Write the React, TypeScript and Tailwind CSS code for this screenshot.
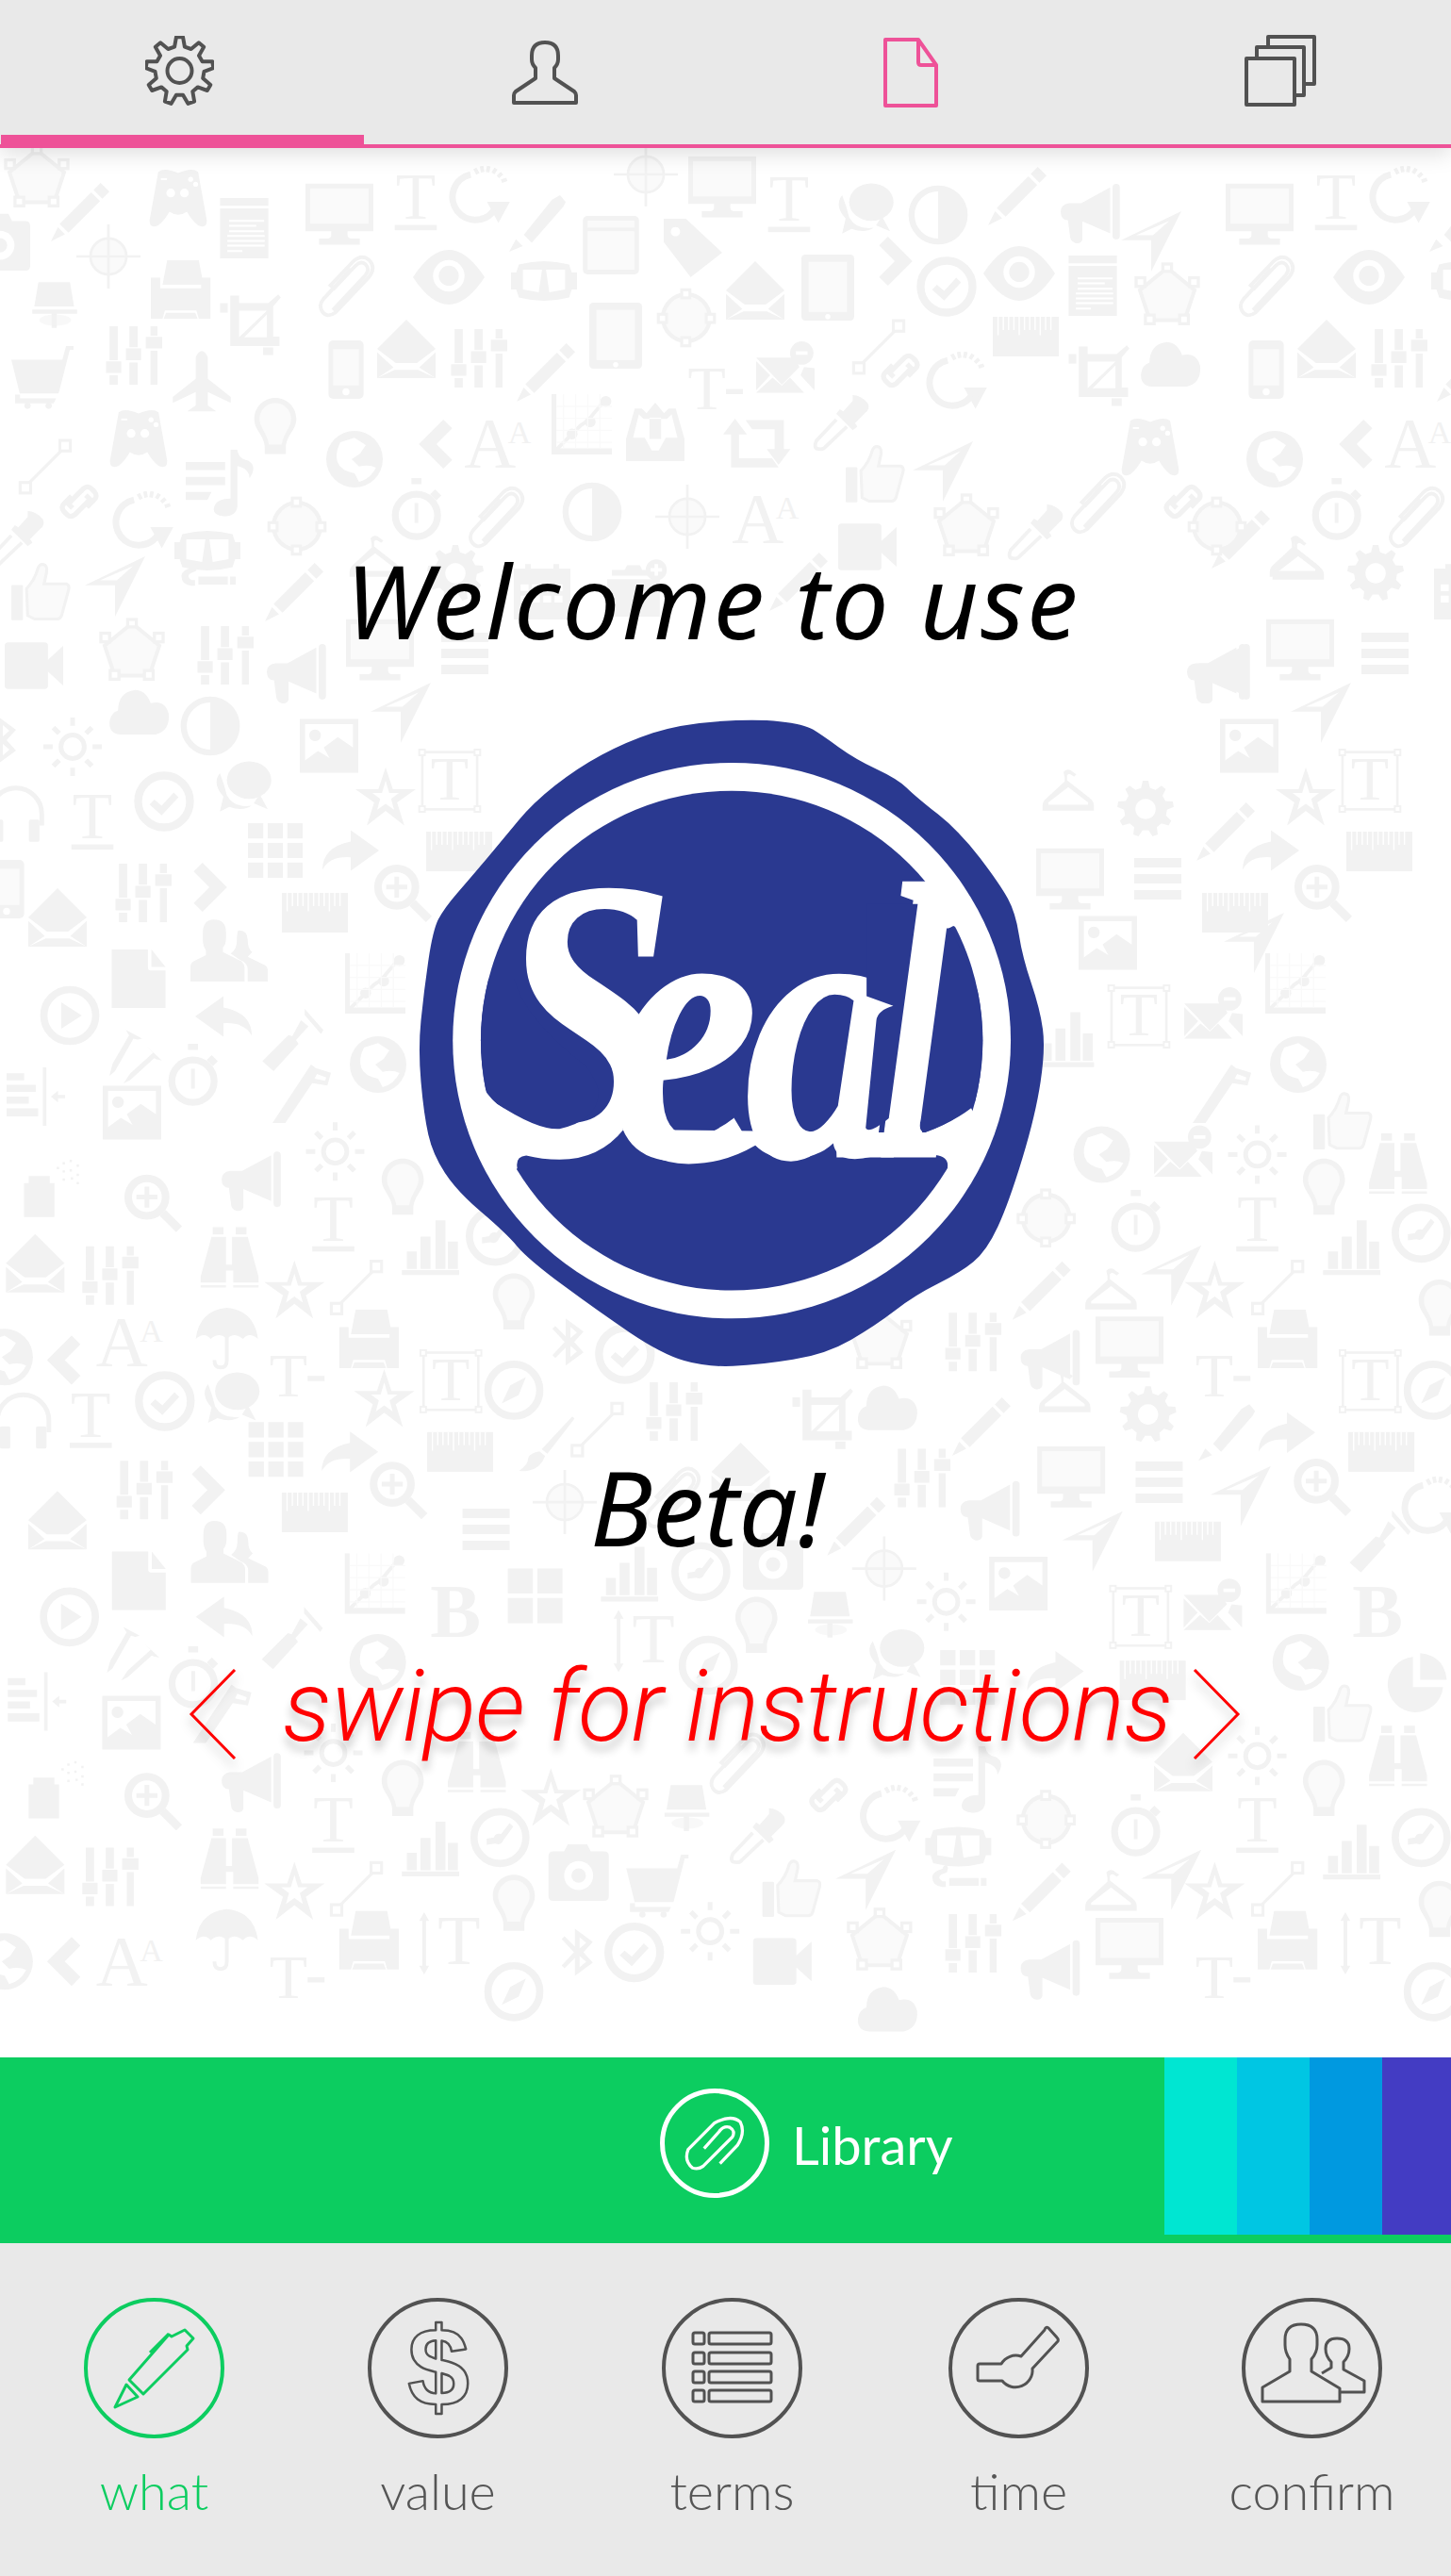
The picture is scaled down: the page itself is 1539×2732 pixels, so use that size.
const G = '#f2f2f2';
const L = '#fafafa';

function gearPath(cx: number, cy: number, ro: number, ri: number, n: number) {
  let d = '';
  for (let i = 0; i < n; i++) {
    const a = (i / n) * Math.PI * 2 - Math.PI / 2;
    const s = (Math.PI * 2) / n;
    const pts: [number, number][] = [
      [ri, a - s * 0.3],
      [ro, a - s * 0.14],
      [ro, a + s * 0.14],
      [ri, a + s * 0.3],
    ];
    pts.forEach(([r, t], j) => {
      d += `${i === 0 && j === 0 ? 'M' : 'L'}${(cx + r * Math.cos(t)).toFixed(1)} ${(cy + r * Math.sin(t)).toFixed(1)}`;
    });
  }
  return d + 'Z';
}

function smooth(pts: number[][]) {
  const mid = (a: number[], b: number[]) => [(a[0] + b[0]) / 2, (a[1] + b[1]) / 2];
  const start = mid(pts[pts.length - 1], pts[0]);
  let d = `M${start[0]} ${start[1]}`;
  pts.forEach((p, i) => {
    const m = mid(p, pts[(i + 1) % pts.length]);
    d += `Q${p[0]} ${p[1]} ${m[0]} ${m[1]}`;
  });
  return d + 'Z';
}

const serif = 'Liberation Serif';

// background pattern drawings, all in a 100x100 box
const symbols: Record<string, React.ReactNode> = {
  monitor: <><path d="M0 8h100v70H62v6q0 5 8 5h10v9H20v-9h10q8 0 8-5v-6H0z" /><rect x="7" y="15" width="86" height="52" fill={L} /></>,
  T: <><text x="50" y="78" fontFamily={serif} fontSize="112" textAnchor="middle">T</text><rect x="14" y="88" width="72" height="9" /></>,
  pencil: <path d="M85 0l15 15-12 12L73 12zM69 16l15 15-54 54-15-15zM12 76l12 12L0 100z" />,
  pen: <path d="M90 0l10 12-4 8-56 64-14-14 50-62zM12 78l12 12L0 100z" />,
  gamepad: <><path d="M18 8q10-8 32 2 22-10 32-2l14 78q0 14-14 8-10-8-18-22-14 10-28 0-8 14-18 22-14 6-14-8z" /><circle cx="38" cy="42" r="7" fill="#fff" /><circle cx="60" cy="42" r="7" fill="#fff" /><rect x="22" y="18" width="10" height="3" fill="#fff" /><circle cx="70" cy="20" r="4" fill="#fff" /><circle cx="78" cy="28" r="4" fill="#fff" /></>,
  notes: <><path d="M10 0h80v13H10zM10 17h80v83H10z" /><path d="M25 38h58M25 46h45M25 55h58M22 63h62M22 71h62M22 79h62M22 88h25" stroke="#fff" strokeWidth="3" /></>,
  gauge: <><path d="M30 22a38 38 0 1 0 42 54" fill="none" stroke={G} strokeWidth="11" /><path d="M62 70h28l-14 26zM37 12l5 9 M48 8l2 10M60 8l-2 10M72 12l-5 8M82 20l-7 6M90 30l-9 3" stroke={G} strokeWidth="6" /></>,
  target: <g fill="none" stroke={G} strokeWidth="4"><circle cx="50" cy="50" r="28" fill={L} /><path d="M50 0v100M0 50h100" /></g>,
  lamp: <><path d="M18 30h62l8 48H10zM6 84h88v8H6zM44 92h10v28H44z" transform="scale(.9)" /><ellipse cx="46" cy="94" rx="28" ry="10" opacity=".5" /></>,
  printer: <path d="M28 0h54l8 42H20zM0 30h16v18h70V30h16v70H82l-4-14H24l-4 14H0zM26 90h50l4 10H22z" />,
  clip: <path d="M22 92L76 34q8-10 0-18-8-6-16 2L24 56l-6-5 38-40q14-12 26-2 12 12 0 28L26 96q-14 10-22-2-6-10 2-20L52 24" fill="none" stroke={G} strokeWidth="6" />,
  eye: <><path d="M0 50Q25 12 50 12T100 50Q75 88 50 88T0 50z" /><circle cx="50" cy="48" r="22" fill="#fff" /><circle cx="50" cy="48" r="14" /></>,
  crop: <><path d="M16 6h14v12h46L92 4l4 5-12 14v48h10v15H16z" /><path d="M30 30h44L30 72zM38 72l36-36v36z" fill="#fff" /><rect x="0" y="18" width="12" height="15" /><rect x="68" y="88" width="16" height="12" /></>,
  cart: <><path d="M0 22h82l6-22h12v6h-6L76 76H14v8h58l-4 8H6v-14h8z" /><circle cx="26" cy="96" r="5" /><circle cx="60" cy="96" r="5" /></>,
  sliders: <path d="M10 0h14v58H10zM4 60h26v20H4zM10 84h14v16H10zM44 0h14v36H44zM38 38h26v20H38zM44 62h14v38H44zM80 0h12v16H80zM72 18h28v20H72zM80 42h12v58H80z" />,
  plane: <path d="M40 12q10-20 20 0v36l38 30v10L60 70v22l14 10H26l14-10V70L2 88V78l38-30z" />,
  phone: <><rect x="20" y="0" width="60" height="100" rx="8" /><rect x="28" y="15" width="44" height="62" fill={L} /><circle cx="50" cy="88" r="6" fill="#fff" /></>,
  envOpen: <><path d="M50 0l50 50-32 24H32L0 50zM0 56l28 26L0 100zM100 56L72 82l28 18zM30 86h40l30 14H0z" /></>,
  bulb: <><path d="M50 0c20 0 36 16 36 36 0 20-18 28-18 50v10H32V86C32 64 14 56 14 36 14 16 30 0 50 0z" /><path d="M50 9c15 0 27 12 27 27 0 15-13 24-16 44H39C36 60 23 51 23 36 23 21 35 9 50 9z" fill={L} /></>,
  globe: <><circle cx="50" cy="50" r="50" /><path d="M25 20Q15 40 20 55T50 75l8 15q20-5 30-25-12-6-30-2L45 50 60 40 70 25 50 12z" fill="#fff" /></>,
  chevL: <path d="M60 0l18 18-32 32 32 32-18 18L10 50z" />,
  chevR: <path d="M40 0l50 50-50 50-18-18 32-32-32-32z" />,
  line: <><path d="M15 85L85 15" stroke={G} strokeWidth="5" /><rect x="75" y="5" width="18" height="18" fill="#fff" stroke={G} strokeWidth="5" /><rect x="7" y="77" width="18" height="18" fill="#fff" stroke={G} strokeWidth="5" /></>,
  link: <path d="M38 62l-8-8 28-28q8-6 14 0l6 6q6 8 0 14L64 60M62 38l8 8-28 28q-8 6-14 0l-6-6q-6-8 0-14l14-14" fill="none" stroke={G} strokeWidth="9" />,
  music: <path d="M0 18h58v12H0zM0 40h58v12H0zM0 62h38l-6 12H0zM66 0h10q2 14 16 16 14 8 2 26 0-14-18-18v60q-2 14-20 14-18-2-14-14 4-12 24-12z" />,
  node: <><circle cx="50" cy="50" r="40" fill={L} stroke={G} strokeWidth="7" /><g fill="#fff" stroke={G} strokeWidth="5"><rect x="42" y="2" width="14" height="14" /><rect x="42" y="84" width="14" height="14" /><rect x="2" y="44" width="14" height="14" /><rect x="84" y="44" width="14" height="14" /></g></>,
  pentagon: <><path d="M50 6L94 42 78 90H22L6 42z" fill={L} stroke={G} strokeWidth="6" /><g fill="#fff" stroke={G} strokeWidth="5"><rect x="43" y="0" width="14" height="12" /><rect x="0" y="22" width="14" height="14" /><rect x="86" y="22" width="14" height="14" /><rect x="15" y="82" width="14" height="14" /><rect x="70" y="82" width="14" height="14" /></g></>,
  stopwatch: <><circle cx="48" cy="60" r="34" fill="none" stroke={G} strokeWidth="11" /><path d="M40 0h16v10H40zM78 18l10 10-8 8-10-10zM45 40h6v32h-6z" /></>,
  dropper: <><path d="M70 0q14 0 26 14 4 10-4 16l-18 18 4 6-8 6-28-28 6-8 6 4 16-18z" /><path d="M42 42L8 78q-6 14 4 14 8 2 12-4l36-34" fill="none" stroke={G} strokeWidth="6" /></>,
  goggles: <path fillRule="evenodd" d="M12 25q38-10 76 0l4 12h8v26h-8l-4 12q-38 10-76 0l-4-12H0V37h8zM18 33v30l24 4 5-34zM53 33l5 34 24-4V33z" />,
  hanger: <path d="M42 6q8-8 16 0l6 4-4 4-6-4q-4-2-6 2v8l38 30q8 6 8 14v8H6v-8q0-8 8-14L44 22v-6zM50 32L16 58v4h68v-4z" fillRule="evenodd" />,
  gear: <path fillRule="evenodd" d={gearPath(50, 50, 50, 38, 9) + 'M50 32a18 18 0 1 0 .1 0z'} />,
  thumb: <><rect x="0" y="38" width="20" height="60" rx="2" /><path d="M26 44Q40 30 46 8q4-8 12-4 4 4 2 14l-4 18h38q6 2 4 10L86 90q-2 6-8 6H40L28 90z" fill={L} stroke={G} strokeWidth="5" /></>,
  nav: <path d="M100 0L50 100V48H0zM80 16L25 40h28z" fillRule="evenodd" />,
  cigarette: <path d="M22 20q2-8 8-6l2 4-2 8-10 4q-8 6 2 12h6v10H22Q4 50 4 34 6 24 22 20zM34 36h52v14H34zM90 36h10v14H90z" />,
  half: <><circle cx="50" cy="50" r="44" fill="none" stroke={G} strokeWidth="10" /><path d="M50 6a44 44 0 0 1 0 88z" /></>,
  calc: <><rect x="2" y="0" width="96" height="100" rx="8" /><rect x="10" y="8" width="80" height="12" fill={L} /><rect x="10" y="26" width="80" height="66" fill={L} /></>,
  tag: <path fillRule="evenodd" d="M0 0h38l62 58-54 42L0 40zM20 14a8 8 0 1 0 .1 0z" />,
  tablet: <><rect x="10" y="0" width="80" height="100" rx="6" /><rect x="21" y="11" width="58" height="76" fill={L} /><circle cx="50" cy="94" r="4" fill="#fff" /></>,
  check: <><circle cx="50" cy="50" r="43" fill="none" stroke={G} strokeWidth="13" /><path d="M26 55l8-8 12 10 20-22 8 8-28 30z" /></>,
  chat: <><path d="M10 24q-14 18 6 40L10 90l16-8q24 8 38-2-30 4-42-18-4-18-12-38z" /><ellipse cx="60" cy="36" rx="38" ry="32" /><path d="M78 60l14 26-24-10z" /></>,
  Tminus: <><text x="36" y="82" fontFamily={serif} fontSize="110" textAnchor="middle">T</text><rect x="70" y="46" width="30" height="9" /></>,
  envMinus: <><path d="M0 28h66l8 16L44 74 0 28zM0 34l24 24L0 84zM82 44l18 2v38L76 58zM28 62l16 14 14-14 24 26H0z" /><circle cx="78" cy="20" r="20" /><rect x="68" y="17" width="20" height="6" fill="#fff" /></>,
  chart: <><path d="M0 0h8v90h92v10H0z" /><path d="M8 92L48 52 60 44 90 8" fill="none" stroke={G} strokeWidth="6" /><circle cx="34" cy="66" r="9" /><circle cx="64" cy="46" r="9" /><circle cx="90" cy="12" r="9" /><path d="M20 0v90M40 0v90M60 0v90M80 0v90M8 20h92M8 40h92M8 60h92M8 80h92" stroke={L} strokeWidth="2" /></>,
  inbox: <path d="M15 10h12l8 8L50 0l15 18 8-8h12l15 52v38H0V62zM40 26v36h20V26zM22 20L12 60h20l12 22h12l12-22h20L78 20 70 28H30z" fillRule="evenodd" />,
  retweet: <path d="M18 10l18 24H24v36h50l10 14H12V34H0zM34 12h58v44h10L84 80 66 56h12V26H44z" />,
  Aa: <><text x="38" y="88" fontFamily={serif} fontSize="112" textAnchor="middle">A</text><text x="84" y="50" fontFamily={serif} fontSize="50" textAnchor="middle">A</text></>,
  A: <text x="50" y="90" fontFamily={serif} fontSize="130" textAnchor="middle">A</text>,
  B: <text x="50" y="90" fontFamily={serif} fontWeight="bold" fontSize="130" textAnchor="middle">B</text>,
  video: <path d="M6 10h62q6 0 6 6v24l26-24v68L74 60v24q0 6-6 6H6q-6 0-6-6V16q0-6 6-6z" />,
  calendar: <><path d="M0 10h20V2h10v8h40V2h10v8h20v90H0z" /><path d="M12 38h14v12H12zM32 38h14v12H32zM52 38h14v12H52zM72 38h14v12H72zM12 58h14v12H12zM32 58h14v12H32zM52 58h14v12H52zM72 58h14v12H72z" fill="#fff" /></>,
  cameraPlus: <><path d="M8 20h22l4-8h22l4 8h10v10H8zM0 36h90v64H0z" /><circle cx="84" cy="20" r="18" /><path d="M81 10h6v7h7v6h-7v7h-6v-7h-7v-6h7z" fill="#fff" /></>,
  camera: <><path d="M8 18h18l6-12h32l6 12h22q8 0 8 8v66q0 8-8 8H8q-8 0-8-8V26q0-8 8-8z" /><circle cx="50" cy="58" r="24" fill="#fff" /><circle cx="50" cy="58" r="12" /></>,
  megaphone: <path d="M92 0q6 0 6 6v80q0 6-6 6t-6-6V6q0-6 6-6zM82 6v76L36 62v30q-2 8-12 6-6-2-8-8L12 60q-12 0-12-14 0-12 14-14h20z" />,
  list: <path d="M0 6h100v20H0zM0 40h100v20H0zM0 74h100v20H0z" />,
  cloud: <path d="M20 86Q0 84 2 64q2-14 14-18Q16 16 44 12q18 0 26 22 24-6 30 18 2 28-22 34z" />,
  photo: <path fillRule="evenodd" d="M0 4h100v92H0zM9 13v62l22-16 20 12-10-18 24-18 26 18V13zM26 22a10 10 0 1 0 .1 0z" />,
  sun: <><circle cx="50" cy="50" r="20" fill="none" stroke={G} strokeWidth="8" /><path d="M46 0h8v14h-8zM46 86h8v14h-8zM0 46h16v8H0zM84 46h16v8H84zM14 20l6-6 10 10-6 6zM80 14l6 6-10 10-6-6zM14 80l10-10 6 6-10 10zM70 76l6-6 10 10-6 6z" /></>,
  bluetooth: <path d="M42 0l38 28-20 22 20 22-38 28V62L20 84l-6-6 26-28-26-28 6-6 22 22zM52 18v24l14-12zM52 58v24l14-12z" fillRule="evenodd" />,
  headphones: <><path d="M6 70V50a44 44 0 0 1 88 0v20" fill="none" stroke={G} strokeWidth="8" /><rect x="72" y="60" width="18" height="38" rx="3" /><rect x="10" y="60" width="18" height="38" rx="3" /></>,
  star: <path fillRule="evenodd" d="M50 0l12 36h38L69 58l12 38-31-24-31 24 12-38L0 36h38zM50 22l-6 20H28l13 10-5 18 14-10 14 10-5-18 13-10H56z" />,
  Tbox: <><rect x="6" y="4" width="88" height="92" fill="none" stroke={G} strokeWidth="4" /><text x="50" y="80" fontFamily={serif} fontSize="100" textAnchor="middle">T</text><g fill="#fff" stroke={G} strokeWidth="3"><rect x="1" y="0" width="9" height="9" /><rect x="90" y="0" width="9" height="9" /><rect x="1" y="91" width="9" height="9" /><rect x="90" y="91" width="9" height="9" /></g></>,
  grid: <path d="M0 0h28v28H0zM36 0h28v28H36zM72 0h28v28H72zM0 36h28v28H0zM36 36h28v28H36zM72 36h28v28H72zM0 72h28v28H0zM36 72h28v28H36zM72 72h28v28H72z" />,
  grid4: <path d="M0 0h46v46H0zM54 0h46v46H54zM0 54h46v46H0zM54 54h46v46H54z" />,
  redo: <path d="M50 14l50 36-50 36V62Q12 60 0 84 0 44 50 34z" />,
  reply: <path d="M50 14L0 50l50 36V62q38-2 50 22 0-40-50-50z" />,
  ruler: <><rect x="0" y="20" width="100" height="60" /><path d="M8 20v28M16 20v20M24 20v20M32 20v20M40 20v28M48 20v20M56 20v20M64 20v20M72 20v28M80 20v20M88 20v20" stroke="#fff" strokeWidth="2" /></>,
  zoomPlus: <><circle cx="40" cy="40" r="32" fill="none" stroke={G} strokeWidth="13" /><path d="M62 72l10-10 28 28-10 10zM36 22h8v14h14v8H44v14h-8V44H22v-8h14z" /></>,
  users: <path d="M30 4q16 0 16 16v8q0 8-4 12v6l24 12q4 4 4 8v18H0V66q0-6 4-8l16-8v-6q-4-6-4-14v-8q0-18 14-18zM62 18q12 0 12 12 0 12 6 16l-6 6 20 10q6 2 6 8v14H74V68q0-8-10-12L52 48q8-6 8-16 0-12 2-14z" />,
  doc: <path d="M4 0h62v32q0 4 4 4h26v64H4zM72 0l24 30H72z" />,
  play: <><circle cx="50" cy="50" r="43" fill="none" stroke={G} strokeWidth="12" /><path d="M36 28l34 22-34 22z" /></>,
  hammer: <path d="M70 0l30 34-4 6-26-30zM64 18l12 10-20 22 4 6L20 100 2 84l42-42 6 2z" />,
  nails: <path d="M30 2l30 16-8 2-8-2L10 78l-10 8 6-22L36 12zM68 32l28 26-10-2-4-2-44 40-12 6 12-18 42-38z" />,
  saw: <path d="M66 0l8 6 26 8-6 22-26-4-46 68H0zM76 16l-4 8 18 4 2-6z" fillRule="evenodd" />,
  listLeft: <path d="M0 10h30v12H0zM0 30h50v12H0zM0 50h38v12H0zM0 70h54v14H0zM62 0h6v100h-6zM76 50l12-10v7h12v6H88v7z" />,
  spray: <><path d="M12 30h36v12h8v58H4V42h8z" /><path d="M70 6h4v4h-4zM82 2h4v4h-4zM94 10h4v4h-4zM70 20h4v4h-4zM82 18h4v4h-4zM94 26h4v4h-4zM60 14h4v4h-4zM70 34h4v4h-4zM84 32h4v4h-4zM94 40h4v4h-4z" /></>,
  binoculars: <path d="M22 0h18v12H22zM60 0h18v12H60zM20 16h24v46H54V16h26l18 66v10H56V72H44v20H2V82zM2 96h42v4H2zM56 96h42v4H56z" />,
  umbrella: <><path d="M50 0q44 4 50 50-14-12-24 0-14-12-26 0-12-12-26 0-10-12-24 0Q6 4 50 0z" /><path d="M50 44v40q0 12-10 12t-10-12" fill="none" stroke={G} strokeWidth="6" /></>,
  brush: <path d="M96 0l4 4-48 62-10-8zM38 62l10 8q-8 22-30 26-10 2-16 0 16-10 16-22 4-10 20-12z" />,
  bars: <path d="M4 90h92v8H4zM12 60h16v28H12zM34 36h16v52H34zM58 10h16v78H58zM78 44h16v44H78z" />,
  clock: <><circle cx="50" cy="50" r="43" fill="none" stroke={G} strokeWidth="12" /><path d="M66 26l6 6-16 22q-4 10-14 6l-14 2v-10l12-2q2-8 12-6z" /></>,
  compass: <><circle cx="50" cy="50" r="43" fill="none" stroke={G} strokeWidth="12" /><path d="M70 28L58 58 30 72l14-30z" /></>,
  Tarrow: <><text x="66" y="84" fontFamily={serif} fontSize="112" textAnchor="middle">T</text><path d="M10 0l8 14h-5v72h5l-8 14-8-14h5V14H2z" /></>,
  pie: <path d="M44 6v50h50a46 46 0 1 1-50-50zM56 0q40 4 44 44H56z" />,
};

const sizes: Record<string, number> = {
  monitor: 72, T: 62, pencil: 62, pen: 60, gamepad: 66, notes: 64, gauge: 64, target: 68, lamp: 60, printer: 62, clip: 64, eye: 76, crop: 67, cart: 66, sliders: 62, plane: 64, phone: 62, envOpen: 62, bulb: 62, globe: 60, chevL: 52, chevR: 52, line: 62, link: 58, music: 72, node: 62, pentagon: 66, stopwatch: 66, dropper: 62, goggles: 70, hanger: 62, gear: 60, thumb: 62, nav: 64, cigarette: 60, half: 64, calc: 62, tag: 62, tablet: 70, check: 64, chat: 62, Tminus: 60, envMinus: 62, chart: 64, inbox: 62, retweet: 70, Aa: 68, video: 62, calendar: 60, cameraPlus: 62, camera: 64, megaphone: 64, list: 50, cloud: 64, photo: 62, sun: 62, bluetooth: 50, headphones: 62, star: 64, Tbox: 66, grid: 58, grid4: 58, redo: 60, reply: 60, ruler: 70, zoomPlus: 62, users: 82, doc: 62, play: 64, hammer: 66, nails: 58, saw: 62, listLeft: 62, spray: 62, binoculars: 64, umbrella: 66, brush: 60, bars: 66, clock: 64, compass: 64, Tarrow: 66, pie: 64, A: 60, B: 62,
};

// upper part of the wallpaper, page coordinates. x >= 314 repeats 976px further right
const upper: [string, number, number][] = [
  ['pentagon', 39, 188], ['pencil', 85, 225], ['gamepad', 189, 210], ['notes', 259, 242], ['monitor', 360, 225], ['T', 441, 215], ['gauge', 512, 203], ['camera', 0, 255], ['target', 115, 272], ['lamp', 61, 313], ['printer', 191, 307], ['clip', 371, 302], ['eye', 476, 294], ['crop', 267, 343], ['cart', 45, 400], ['sliders', 141, 377], ['plane', 214, 403], ['phone', 367, 392], ['envOpen', 431, 370], ['sliders', 507, 380], ['gamepad', 147, 465], ['bulb', 292, 453], ['globe', 376, 487], ['chevL', 465, 471], ['line', 48, 495], ['link', 84, 532], ['gauge', 155, 548], ['music', 233, 513], ['node', 315, 558], ['stopwatch', 443, 540], ['dropper', 17, 573], ['goggles', 220, 584], ['hanger', 398, 598], ['gear', 483, 608], ['thumb', 43, 628], ['nav', 122, 622], ['cigarette', 220, 620], ['pencil', 312, 628],
  ['pen', 570, 237], ['target', 685, 185], ['monitor', 766, 196], ['T', 837, 217], ['chat', 918, 223], ['half', 995, 228], ['calc', 648, 260], ['tag', 735, 263], ['goggles', 577, 298], ['envOpen', 801, 308], ['tablet', 878, 305], ['chevR', 947, 277], ['check', 1004, 304], ['tablet', 653, 356], ['node', 728, 337], ['line', 932, 368], ['link', 955, 393], ['pencil', 579, 395], ['Tminus', 758, 415], ['envMinus', 833, 393], ['chart', 617, 450], ['inbox', 695, 458], ['retweet', 802, 472], ['dropper', 892, 450], ['Aa', 528, 470], ['clip', 530, 547], ['half', 628, 543], ['target', 729, 548], ['Aa', 812, 550], ['video', 920, 580], ['thumb', 928, 503], ['nav', 1000, 500], ['pencil', 847, 617], ['calendar', 575, 627], ['cameraPlus', 675, 623],
  ['pencil', 1079, 208], ['megaphone', 1157, 227], ['nav', 1221, 256], ['eye', 1081, 290], ['notes', 1159, 303], ['pentagon', 1238, 313], ['ruler', 1088, 357], ['cloud', 1241, 387], ['crop', 1167, 397], ['gauge', 1018, 400], ['gamepad', 1220, 474], ['clip', 1168, 532], ['link', 1255, 532], ['pentagon', 1025, 558], ['dropper', 1098, 566], ['pencil', 1316, 572], ['hanger', 1377, 601],
  ['video', 36, 706], ['pentagon', 140, 690], ['sliders', 238, 695], ['megaphone', 315, 715], ['monitor', 403, 687], ['list', 493, 693], ['cloud', 147, 756], ['half', 223, 770], ['nav', 425, 756], ['photo', 349, 791], ['sun', 77, 792], ['bluetooth', 2, 785], ['headphones', 17, 863], ['T', 98, 872], ['check', 174, 850], ['chat', 258, 836], ['star', 409, 846], ['Tbox', 477, 828], ['grid', 292, 902], ['redo', 372, 902], ['ruler', 487, 903], ['sliders', 151, 947], ['chevR', 220, 941], ['ruler', 334, 968], ['zoomPlus', 427, 947], ['envOpen', 61, 973], ['phone', 7, 943], ['users', 243, 1013], ['doc', 147, 1038], ['chart', 398, 1043], ['play', 74, 1077], ['reply', 237, 1078], ['hammer', 310, 1103], ['nails', 145, 1120], ['stopwatch', 206, 1140], ['globe', 401, 1129], ['saw', 320, 1160], ['listLeft', 38, 1163], ['photo', 140, 1180],
  ['Tbox', 1208, 1078], ['envMinus', 1287, 1078], ['megaphone', 1295, 715], ['monitor', 1135, 930], ['hanger', 1133, 846], ['gear', 1215, 858], ['pencil', 1300, 882], ['list', 1228, 932], ['nav', 1330, 1000], ['bars', 1130, 1100], ['photo', 1175, 1000],
];

// lower part of the wallpaper, measured on the 1.019x by 1.56x crop
const lower: [string, number, number][] = [
  ['sun', 362, 80], ['spray', 55, 140], ['zoomPlus', 165, 165], ['megaphone', 272, 130], ['T', 360, 200], ['bulb', 435, 140], ['bars', 465, 235], ['clock', 535, 220], ['envOpen', 38, 265], ['sliders', 118, 285], ['binoculars', 248, 255], ['star', 318, 310], ['line', 385, 305], ['bulb', 555, 330],
  ['globe', 5, 420], ['chevL', 72, 425], ['Aa', 140, 395], ['umbrella', 245, 390], ['printer', 398, 390], ['bluetooth', 615, 395], ['check', 675, 415], ['Tminus', 320, 455], ['star', 415, 490], ['Tbox', 487, 460], ['compass', 555, 475], ['check', 178, 493], ['chat', 250, 490], ['T', 98, 525], ['headphones', 25, 525], ['grid', 298, 573], ['redo', 378, 577], ['ruler', 497, 577], ['brush', 590, 565], ['line', 645, 540], ['sliders', 727, 510], ['crop', 890, 520], ['cloud', 958, 505], ['pencil', 1060, 535], ['hanger', 1150, 490], ['gear', 1240, 515], ['pen', 1325, 545], ['redo', 1390, 545], ['ruler', 1492, 577], ['megaphone', 1135, 425], ['monitor', 1220, 400], ['Tminus', 1320, 455], ['Tbox', 1480, 460], ['compass', 1548, 475], ['printer', 1390, 390], ['sliders', 1050, 395], ['pentagon', 950, 390],
  ['globe', 1190, 85], ['envMinus', 1278, 85], ['sun', 1358, 85], ['bulb', 1430, 140], ['stopwatch', 1228, 195], ['node', 1130, 190], ['T', 1358, 200], ['bars', 1460, 235], ['clock', 1535, 215], ['thumb', 1450, 30], ['binoculars', 1510, 100], ['hanger', 1200, 320], ['pencil', 1125, 310], ['nav', 1265, 285], ['star', 1312, 310], ['line', 1380, 305], ['bulb', 1555, 340],
  ['sliders', 155, 640], ['chevR', 222, 640], ['zoomPlus', 430, 640], ['ruler', 340, 677], ['list', 525, 705], ['target', 610, 660], ['clip', 730, 650], ['envOpen', 800, 610], ['sliders', 995, 620], ['megaphone', 1070, 675], ['pencil', 925, 700], ['monitor', 1157, 615], ['list', 1252, 627], ['nav', 1340, 650], ['zoomPlus', 1428, 635], ['gauge', 1550, 660], ['nav', 1180, 725], ['ruler', 1283, 725], ['hammer', 1490, 725],
  ['envOpen', 62, 690], ['users', 248, 750], ['doc', 150, 790], ['chart', 405, 795], ['B', 492, 845], ['grid4', 578, 815], ['bars', 680, 775], ['clock', 757, 775], ['camera', 835, 755], ['lamp', 900, 830], ['target', 955, 770], ['sun', 1022, 825], ['photo', 1100, 795], ['Tbox', 1232, 850], ['envMinus', 1310, 835], ['chart', 1400, 795], ['B', 1488, 845],
  ['play', 75, 850], ['reply', 242, 850], ['hammer', 315, 885], ['nails', 145, 910], ['stopwatch', 210, 950], ['globe', 408, 925], ['Tarrow', 695, 890], ['bulb', 817, 865], ['compass', 765, 930], ['chat', 968, 915], ['listLeft', 40, 990], ['photo', 142, 1025], ['globe', 1405, 925], ['pie', 1530, 960], ['redo', 1140, 940], ['grid', 1045, 950], ['ruler', 1245, 955], ['thumb', 1450, 1010], ['binoculars', 1510, 1080], ['sun', 1358, 1080], ['envOpen', 1278, 1090], ['saw', 240, 1010],
  ['spray', 60, 1135], ['zoomPlus', 165, 1155], ['megaphone', 272, 1125], ['sun', 360, 1075], ['T', 360, 1195], ['bulb', 435, 1135], ['bars', 465, 1230], ['clock', 540, 1215], ['binoculars', 515, 1090], ['clip', 800, 1090], ['music', 1045, 1120], ['link', 895, 1145], ['gauge', 965, 1170], ['star', 595, 1150], ['pentagon', 665, 1165], ['lamp', 745, 1150], ['dropper', 818, 1215], ['goggles', 1035, 1230], ['cigarette', 1035, 1295], ['node', 1130, 1185], ['stopwatch', 1228, 1195], ['T', 1358, 1195], ['bars', 1460, 1235], ['clock', 1535, 1215], ['bulb', 1430, 1135],
  ['envOpen', 38, 1260], ['sliders', 118, 1280], ['binoculars', 248, 1250], ['star', 318, 1305], ['line', 385, 1300], ['bulb', 555, 1325], ['camera', 625, 1270], ['cart', 710, 1295], ['thumb', 855, 1300], ['nav', 935, 1285], ['pencil', 1125, 1305], ['hanger', 1200, 1315], ['nav', 1265, 1285], ['star', 1312, 1305], ['line', 1380, 1300], ['bulb', 1555, 1335],
  ['globe', 5, 1420], ['chevL', 72, 1420], ['Aa', 140, 1420], ['umbrella', 245, 1385], ['printer', 398, 1385], ['Tarrow', 485, 1390], ['bluetooth', 625, 1405], ['check', 685, 1405], ['sun', 767, 1370], ['video', 845, 1420], ['pentagon', 950, 1385], ['sliders', 1050, 1390], ['megaphone', 1135, 1435], ['monitor', 1220, 1395], ['printer', 1390, 1385], ['Tarrow', 1480, 1390], ['Tminus', 320, 1450], ['compass', 555, 1470], ['cloud', 958, 1500], ['Tminus', 1320, 1450], ['compass', 1548, 1470],
];

const wallpaper: [string, number, number][] = [
  ...upper,
  ...upper.filter(([, x, y]) => x >= 314 && x < 640 && y > 160).map(([n, x, y]) => [n, x + 976, y] as [string, number, number]),
  ...lower.map(([n, x, y]) => [n, x * 0.982, 1170 + y * 0.641] as [string, number, number]),
];

function Wallpaper() {
  return (
    <svg className="absolute inset-0" width="1539" height="2025" viewBox="0 157 1539 2025" fill={G}>
      <defs>
        {Object.entries(symbols).map(([id, body]) => (
          <symbol key={id} id={`s-${id}`} viewBox="0 0 100 100" overflow="visible">
            {body}
          </symbol>
        ))}
      </defs>
      {wallpaper.map(([n, x, y], i) => {
        const s = sizes[n] ?? 62;
        return <use key={i} href={`#s-${n}`} x={x - s / 2} y={y - s / 2} width={s} height={s} />;
      })}
    </svg>
  );
}

const sealOutline = [[850, 48], [960, 60], [1000, 85], [1075, 140], [1170, 185], [1210, 225], [1310, 305], [1400, 425], [1435, 490], [1450, 590], [1490, 710], [1502, 800], [1480, 950], [1420, 1150], [1370, 1260], [1310, 1310], [1210, 1360], [1120, 1430], [1010, 1495], [860, 1520], [740, 1525], [640, 1495], [500, 1400], [340, 1280], [290, 1220], [180, 1125], [125, 1040], [105, 950], [92, 800], [105, 670], [125, 530], [150, 480], [210, 410], [285, 320], [350, 240], [450, 160], [560, 100], [680, 60]];

function SealLogo() {
  const letter = 'font-bold italic';
  return (
    <svg className="block" width="740" height="730" viewBox="0 0 1568 1568" preserveAspectRatio="none" fontFamily={serif}>
      <defs>
        <clipPath id="seal-inner">
          <ellipse cx="797" cy="781" rx="564" ry="569" />
        </clipPath>
      </defs>
      <path d={smooth(sealOutline)} fill="#2a3990" />
      <ellipse cx="797" cy="781" rx="627" ry="633" fill="#fff" />
      <ellipse cx="797" cy="781" rx="564" ry="569" fill="#2a3990" />
      <path d="M236 860Q240 900 270 925Q360 985 420 982L1100 990L1230 990Q1290 970 1335 935L1370 1000L1300 1120L1282 1070Q1285 1045 1255 1042Q1190 1052 1150 1030Q1100 1055 1060 1050Q1030 1045 1025 1015Q990 1050 925 1050Q880 1050 850 1020Q780 1062 700 1062Q600 1060 555 982Q500 1052 410 1052Q370 1052 335 1043Q310 1045 315 1072L290 1100L230 1000Z" fill="#fff" />
      <path d="M1238 425Q1245 450 1215 470L1260 560L1285 525L1295 520L1340 540L1300 420Z" fill="#fff" />
      <g fill="#fff" stroke="#fff" strokeWidth="4">
        <text className={letter} fontSize="860" transform="translate(268 1005) scale(.84 1)">S</text>
        <text className={letter} fontSize="880" transform="translate(522 1045) scale(.86 1)">e</text>
        <text className={letter} fontSize="880" transform="translate(826 1045) scale(.84 1)">a</text>
        <text className={letter} fontSize="900" transform="translate(1120 1045) scale(.7 1)">l</text>
      </g>
      {/* blue pieces laid over the letters, they trim the serifs the wordmark does not have */}
      <g fill="#2a3990" clipPath="url(#seal-inner)">
        <path d="M220 640L308 640Q330 730 470 840Q498 880 498 905Q490 965 410 982Q360 985 270 925Q240 900 225 860Z" />
        <path d="M1215 470L1150 958Q1105 995 1098 980L1122 735Q1125 712 1160 702L1100 680L1100 470Z" />
        <path d="M1287 525Q1370 680 1370 780Q1370 900 1335 930Q1290 970 1232 990Q1215 990 1222 960L1280 525Z" />
      </g>
    </svg>
  );
}

const ink = '#525252';
const pink = '#ee5298';
const green = '#0ccd60';

function TopBar() {
  const gear = gearPath(36.5, 37, 36, 26, 9);
  return (
    <header className="relative z-10 h-[157px] shrink-0 flex flex-col bg-[#e9e9e9] shadow-[0_6px_22px_rgba(0,0,0,0.13)]">
      <div className="h-[143px] flex items-start">
        <svg className="ml-[154px] mt-[38px]" width="73" height="74" viewBox="0 0 73 74" fill="none" stroke={ink} strokeWidth="4" strokeLinejoin="round">
          <path d={gear} />
          <ellipse cx="36.5" cy="37" rx="13" ry="13" />
        </svg>
        <svg className="ml-[316px] mt-[43px]" width="70" height="68" viewBox="0 0 70 68" fill="none" stroke={ink} strokeWidth="4" strokeLinejoin="round">
          <path d="M25 29Q21 25 21 20V16Q21 2 35 2Q49 2 49 16V20Q49 25 45 29V40L66 54Q68 56 68 58V66H2V58Q2 56 4 54L25 40Z" />
        </svg>
        <svg className="ml-[324px] mt-[40px]" width="58" height="74" viewBox="0 0 58 74" fill="none" stroke={pink} strokeWidth="4" strokeLinejoin="round">
          <path d="M2 2H37L56 29V72H2Z" />
          <path d="M37 2V26Q37 29 40 29H56" />
        </svg>
        <svg className="ml-[325px] mt-[37px]" width="76" height="76" viewBox="0 0 76 76" fill="none" stroke={ink} strokeWidth="4" strokeLinejoin="round">
          <path d="M25 13V2H74V52H65" />
          <path d="M13 24V13H63V64H53" />
          <rect x="2" y="25" width="51" height="49" />
        </svg>
      </div>
      <div className="ml-px h-[10px] w-[385px] bg-[#ee5298]" />
      <div className="h-[4px] bg-[#ee5298]" />
    </header>
  );
}

function Chevron({ dir }: { dir: 'left' | 'right' }) {
  return (
    <svg className="shrink-0 drop-shadow-[0_8px_6px_rgba(0,0,0,0.22)]" width="52" height="96" viewBox="0 0 52 96" fill="none" stroke="#ff0000" strokeWidth="3">
      <path d={dir === 'left' ? 'M49 1L3 48L49 95' : 'M3 1L49 48L3 95'} />
    </svg>
  );
}

function LibraryStrip() {
  return (
    <div className="h-[197px] shrink-0 flex items-start bg-[#0ccd60]">
      <div className="ml-[700px] mt-[33px] size-[116px] rounded-full border-[5px] border-white flex items-center justify-center">
        <svg width="66" height="60" viewBox="-2 -2 70 64" fill="none" stroke="#fff" strokeWidth="3.5">
          <path d="M39 53L59 32Q68 18 62 6Q52 -3 33 7L3 37Q-2 50 8 58Q15 60 20 56L53 23Q57 16 50 12Q43 10 38 17L21 36" />
        </svg>
      </div>
      <span className="ml-[24px] mt-[53px] font-['Lato'] text-[56px] leading-[80px] text-white">Library</span>
      <div className="ml-auto flex h-[188px]">
        <div className="w-[77px] bg-[#00e6d2]" />
        <div className="w-[77px] bg-[#00c6e3]" />
        <div className="w-[77px] bg-[#0099e0]" />
        <div className="w-[73px] bg-[#433cc3]" />
      </div>
    </div>
  );
}

const tabs = [
  {
    label: 'what',
    ml: 'ml-[89px]',
    active: true,
    icon: (
      <>
        <path d="M48 87L90 39L93 41L107 34L116 43L109 51L110 55L63 102Z" />
        <path d="M70 58L90 38" />
        <path d="M45 92L57 105L33 116Z" />
      </>
    ),
  },
  {
    label: 'value',
    ml: 'ml-[152px]',
    icon: (
      <text x="75" y="114" fontFamily="Liberation Sans" fontWeight="bold" fontSize="118" textAnchor="middle" strokeWidth="2.5">
        $
      </text>
    ),
  },
  {
    label: 'terms',
    ml: 'ml-[163px]',
    icon: (
      <>
        {[37, 58, 78, 98].map((y) => (
          <g key={y}>
            <rect x="33" y={y} width="12" height="12" rx="2" />
            <rect x="50" y={y} width="66" height="12" rx="2" />
          </g>
        ))}
      </>
    ),
  },
  {
    label: 'time',
    ml: 'ml-[155px]',
    icon: <path d="M56 70H33Q31 70 31 72V86Q31 88 33 88H57A18 18 0 0 0 89 75L116 46Q117 44 115 42L106 32Q103 30 102 34L77 62A18 18 0 0 0 56 70Z" />,
  },
  {
    label: 'confirm',
    ml: 'ml-[162px]',
    icon: (
      <>
        <path d="M51 65Q46 58 46 50V44Q46 28 63 28Q80 28 80 44V50Q80 58 74 65V78L104 96V110H22V95L51 78Z" />
        <path d="M85 80L95 74V68Q89 62 89 54Q89 43 101 43Q114 43 114 54Q114 62 108 68V76L130 88V100H104" />
      </>
    ),
  },
];

function TabBar() {
  return (
    <nav className="flex-1 flex items-start bg-[#e9e9e9] pt-[58px]">
      {tabs.map((t) => (
        <div key={t.label} className={`${t.ml} w-[149px] shrink-0 flex flex-col items-center`}>
          <svg width="149" height="149" viewBox="0 0 149 149" fill="none" stroke={t.active ? green : ink} strokeWidth="3" strokeLinejoin="round">
            <circle cx="74.5" cy="74.5" r="72.5" strokeWidth="4" />
            {t.icon}
          </svg>
          <span className={`mt-[21px] whitespace-nowrap font-['Lato'] font-light text-[54px] leading-[70px] ${t.active ? 'text-[#0ccd60]' : 'text-[#555555]'}`}>
            {t.label}
          </span>
        </div>
      ))}
    </nav>
  );
}

export default function App() {
  return (
    <div className="w-[1539px] h-[2732px] overflow-hidden flex flex-col bg-white">
      <TopBar />
      <main className="relative h-[2025px] shrink-0 overflow-hidden">
        <Wallpaper />
        <div className="relative flex flex-col items-start">
          <h1 className="ml-[366px] mt-[410px] h-[173px] whitespace-nowrap font-['Noto_Sans'] italic text-[108px] leading-[140px] tracking-[2.4px] text-black">
            Welcome to use
          </h1>
          <div className="ml-[400px]">
            <SealLogo />
          </div>
          <p className="ml-[626px] mt-[58px] h-[138px] font-['Noto_Sans'] italic text-[110px] leading-[138px] text-black">Beta!</p>
          <div className="ml-[200px] mt-[104px] flex items-center">
            <Chevron dir="left" />
            <span className="ml-[48px] -mt-[14px] whitespace-nowrap font-['Roboto'] font-light italic text-[105px] leading-[96px] tracking-[-0.9px] text-[#ff0000] [text-shadow:0_10px_10px_rgba(0,0,0,0.2)]">
              swipe for instructions
            </span>
            <span className="ml-[21px]">
              <Chevron dir="right" />
            </span>
          </div>
        </div>
      </main>
      <LibraryStrip />
      <TabBar />
    </div>
  );
}
